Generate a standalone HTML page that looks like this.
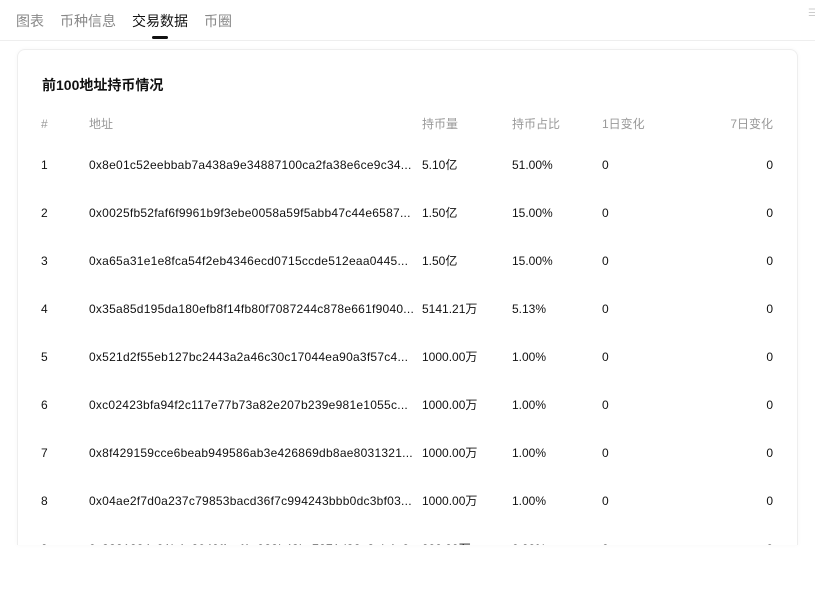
<!DOCTYPE html>
<html><head><meta charset="utf-8"><style>
*{margin:0;padding:0;box-sizing:border-box}
body{width:815px;height:590px;background:#fff;font-family:"Liberation Sans","Noto Sans CJK SC",sans-serif;position:relative;overflow:hidden;color:#111}
.tab{position:absolute;top:11px;font-size:14px;color:#888}
.ul{position:absolute;left:152px;top:36px;width:16px;height:3px;background:#111;border-radius:2px}
.hr{position:absolute;left:0;right:0;top:40px;height:1px;background:#eee}
.card{position:absolute;left:17px;top:49px;width:781px;height:496px;border:1px solid #eee;border-bottom:none;border-radius:8px 8px 0 0;overflow:hidden;box-shadow:0 0 4px rgba(0,0,0,0.04)}
.t{position:absolute;left:24px;top:25px;font-size:14px;font-weight:bold}
.c{position:absolute;font-size:12px;white-space:nowrap;line-height:14px}
.a{letter-spacing:0.25px}
.h{color:#999;font-size:12px}
.r{text-align:right;width:60px}
</style></head><body>
<div class="tab" style="left:16px">图表</div>
<div class="tab" style="left:60px">币种信息</div>
<div class="tab" style="left:132px;color:#111">交易数据</div>
<div class="tab" style="left:204px">币圈</div>
<div class="ul"></div>
<div class="hr"></div>
<div style="position:absolute;left:808px;top:8px;width:7px;height:12px;color:#ccc;font-size:10px">☰</div>
<div class="card">
<div class="t">前100地址持币情况</div>
<div class="c h" style="left:23px;top:67px">#</div>
<div class="c h" style="left:71px;top:67px">地址</div>
<div class="c h" style="left:404px;top:67px">持币量</div>
<div class="c h" style="left:494px;top:67px">持币占比</div>
<div class="c h" style="left:584px;top:67px">1日变化</div>
<div class="c h r" style="left:695px;top:67px">7日变化</div>
<div id="rows"></div>
</div>
<script>
var d=[["1","0x8e01c52eebbab7a438a9e34887100ca2fa38e6ce9c34...","5.10亿","51.00%"],
["2","0x0025fb52faf6f9961b9f3ebe0058a59f5abb47c44e6587...","1.50亿","15.00%"],
["3","0xa65a31e1e8fca54f2eb4346ecd0715ccde512eaa0445...","1.50亿","15.00%"],
["4","0x35a85d195da180efb8f14fb80f7087244c878e661f9040...","5141.21万","5.13%"],
["5","0x521d2f55eb127bc2443a2a46c30c17044ea90a3f57c4...","1000.00万","1.00%"],
["6","0xc02423bfa94f2c117e77b73a82e207b239e981e1055c...","1000.00万","1.00%"],
["7","0x8f429159cce6beab949586ab3e426869db8ae8031321...","1000.00万","1.00%"],
["8","0x04ae2f7d0a237c79853bacd36f7c994243bbb0dc3bf03...","1000.00万","1.00%"],
["9","0x3381284c91b4a2049ffeaf1e983b43bc7871d32e3ab4e6...","999.99万","0.99%"]];
var h="";d.forEach(function(r,i){var y=108+48*i;
h+='<div class="c" style="left:23px;top:'+y+'px">'+r[0]+'</div><div class="c a" style="left:71px;top:'+y+'px">'+r[1]+'</div><div class="c" style="left:404px;top:'+y+'px">'+r[2]+'</div><div class="c" style="left:494px;top:'+y+'px">'+r[3]+'</div><div class="c" style="left:584px;top:'+y+'px">0</div><div class="c r" style="left:695px;top:'+y+'px">0</div>';});
document.getElementById("rows").innerHTML=h;
</script>
</body></html>
